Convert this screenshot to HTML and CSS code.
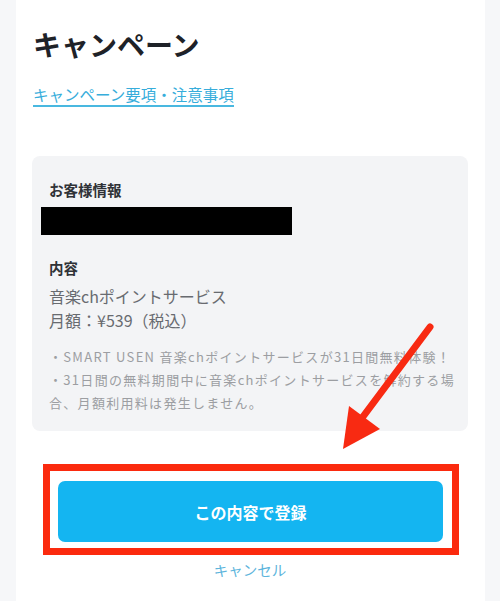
FILE: index.html
```html
<!DOCTYPE html>
<html lang="ja">
<head>
<meta charset="utf-8">
<link rel="stylesheet" href="styles.css">
</head>
<body>
<div class="page">
  <h1 class="title">キャンペーン</h1>
  <a class="terms" href="#">キャンペーン要項・注意事項</a>
  <div class="card">
    <div class="label">お客様情報</div>
    <div class="redact"></div>
    <div class="label label-gap">内容</div>
    <div class="value value-first">音楽chポイントサービス</div>
    <div class="value">月額：¥539（税込）</div>
    <div class="notes">・SMART USEN 音楽chポイントサービスが31日間無料体験！<br>・31日間の無料期間中に音楽chポイントサービスを解約する場<br>合、月額利用料は発生しません。</div>
  </div>
  <div class="highlight">
    <button class="submit">この内容で登録</button>
  </div>
  <a class="cancel" href="#">キャンセル</a>
  <svg class="arrow" width="500" height="601" viewBox="0 0 500 601">
    <line x1="430" y1="327" x2="362" y2="418" stroke="#f82a12" stroke-width="7" stroke-linecap="round"/>
    <polygon points="343,449 349,406 380,429" fill="#f82a12"/>
  </svg>
</div>
</body>
</html>
```
FILE: styles.css
```css
html, body {
  margin: 0;
  padding: 0;
}
body {
  background: #f6f7f9;
  font-family: "Noto Sans CJK JP", "Noto Sans", sans-serif;
  width: 500px;
  height: 601px;
  overflow: hidden;
}
.page {
  margin-left: 16px;
  width: 469px;
  height: 601px;
  background: #ffffff;
  box-sizing: border-box;
  padding: 24px 17px 0 16px;
  display: flex;
  flex-direction: column;
  align-items: flex-start;
}
.title {
  margin: 0 0 0 1px;
  font-size: 28px;
  line-height: 40px;
  font-weight: 700;
  color: #1e2228;
}
.terms {
  margin: 19px 0 0 1px;
  font-size: 15.5px;
  line-height: 22px;
  color: #37addb;
  text-decoration: none;
  border-bottom: 2px solid #49b8e0;
}
.card {
  margin-top: 49px;
  width: 436px;
  box-sizing: border-box;
  background: #f3f4f6;
  border-radius: 8px;
  padding: 24px 10px 17px 17px;
}
.label {
  font-size: 14.5px;
  line-height: 20px;
  font-weight: 700;
  color: #2f3237;
}
.label-gap {
  margin-top: 23px;
}
.redact {
  margin: 7px 0 0 -8px;
  width: 251px;
  height: 28px;
  background: #000;
}
.value {
  font-size: 16px;
  line-height: 24px;
  color: #686b70;
}
.value-first {
  margin-top: 6px;
}
.notes {
  margin-top: 13px;
  font-size: 13px;
  line-height: 23px;
  color: #9c9ea2;
  white-space: nowrap;
  letter-spacing: 1.3px;
}
.highlight {
  margin: 33px 0 0 11px;
  width: 416px;
  height: 91px;
  box-sizing: border-box;
  border: 7px solid #fb2a0e;
  padding: 10px 9px 6px 8px;
  display: flex;
}
.submit {
  flex: 1;
  border: none;
  border-radius: 7px;
  background: #14b5f1;
  color: #ffffff;
  font-family: inherit;
  font-size: 16px;
  font-weight: 700;
  padding: 0;
}
.cancel {
  align-self: center;
  margin: 5px 0 0 0;
  font-size: 14.5px;
  line-height: 20px;
  color: #5db5dc;
  text-decoration: none;
}
.arrow {
  position: absolute;
  left: 0;
  top: 0;
  pointer-events: none;
}
```
